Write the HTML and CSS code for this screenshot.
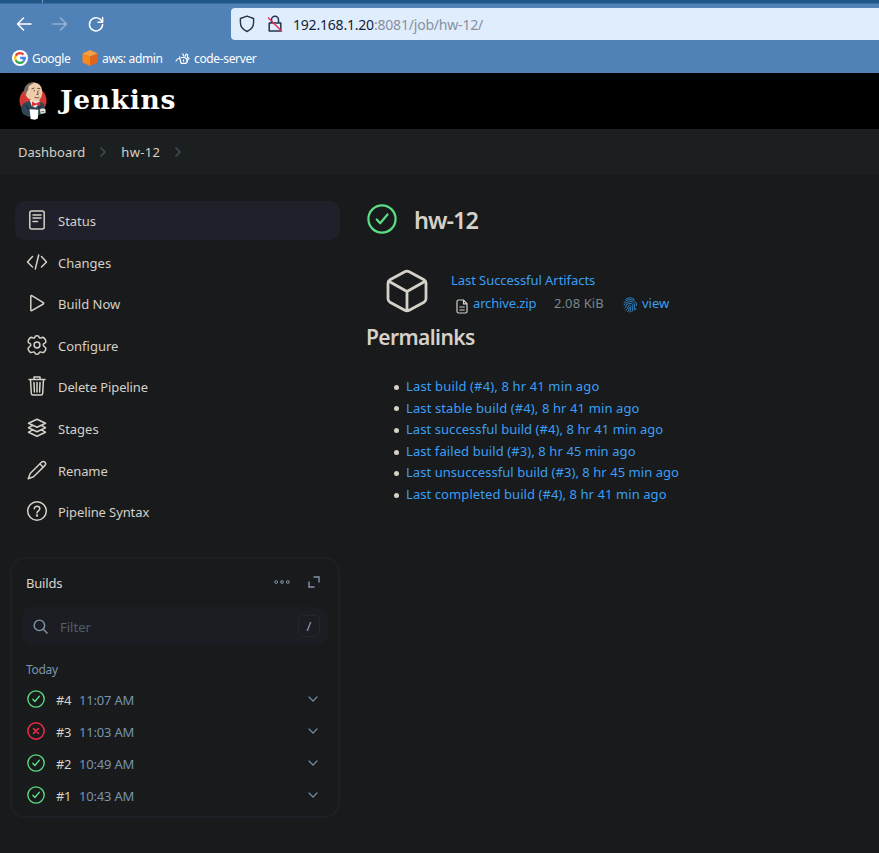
FILE: index.html
```html
<!DOCTYPE html>
<html lang="en">
<head>
<meta charset="utf-8">
<title>hw-12 [Jenkins]</title>
<link rel="stylesheet" href="styles.css">
</head>
<body>
<svg class="defs" width="0" height="0">
  <symbol id="ok" viewBox="0 0 512 512"><circle cx="256" cy="256" r="232" fill="none" stroke="currentColor" stroke-width="38"/><path d="M350 178 L225 328 L166 264" fill="none" stroke="currentColor" stroke-width="38" stroke-linecap="round" stroke-linejoin="round"/></symbol>
  <symbol id="fail" viewBox="0 0 512 512"><circle cx="256" cy="256" r="232" fill="none" stroke="currentColor" stroke-width="44"/><path d="M325 325 187 187M187 325 325 187" fill="none" stroke="currentColor" stroke-width="46" stroke-linecap="round"/></symbol>
  <symbol id="chev" viewBox="0 0 10 6"><path d="M1 1 5 5 9 1" fill="none" stroke="currentColor" stroke-width="1.3" stroke-linecap="round" stroke-linejoin="round"/></symbol>
</svg>
<div class="browser">
  <div class="tabs"><span class="tab-edge"></span></div>
  <div class="toolbar">
    <svg class="nav back" viewBox="0 0 16 16"><path d="M15 8H1.5M7.500 2 1.500 8l6 6"/></svg>
    <svg class="nav forward" viewBox="0 0 16 16"><path d="M1 8h13.500M8.500 2l6 6-6 6"/></svg>
    <svg class="nav reload" viewBox="0 0 16 16"><path d="M14.200 6A6.600 6.600 0 1 0 14.600 8.500"/><path d="M14.600 1.500V6.200H10"/></svg>
    <div class="url">
      <svg class="shield" viewBox="0 0 16 18"><path d="M8 1.200 14.600 3.500V7.500C14.600 11.500 12 14.800 8 16.500 4 14.800 1.400 11.500 1.400 7.500V3.500Z"/></svg>
      <svg class="lock" viewBox="0 0 16 18"><path d="M4.500 8V4.800a3.500 3.500 0 0 1 7 0V8M2.200 8h11.600v8H2.200z"/><path class="slash" d="M1 2.500 15 16.500"/></svg>
      <span class="address"><b>192.168.1.20</b>:8081/job/hw-12/</span>
    </div>
  </div>
  <div class="bookmarks">
    <svg class="bm-google" viewBox="0 0 16 16"><circle cx="8" cy="8" r="8" fill="#fff"/><g fill="none" stroke-width="2.300"><path d="M11.500 4.600A4.800 4.800 0 0 0 3.700 5.800" stroke="#ea4335"/><path d="M3.700 5.800A4.800 4.800 0 0 0 3.700 10.200" stroke="#fbbc05"/><path d="M3.700 10.200A4.800 4.800 0 0 0 11.200 11.600" stroke="#34a853"/><path d="M11.200 11.600A4.800 4.800 0 0 0 12.800 8H8.200" stroke="#4285f4"/></g></svg>
    <span class="bm-text t-google">Google</span>
    <svg class="bm-aws" viewBox="0 0 16 16"><path d="M8 0 15.500 3.500 8 6.500.5 3.500Z" fill="#f9a03f"/><path d="M.5 3.500 8 6.500V16L.5 12.500Z" fill="#f68a1f"/><path d="M15.500 3.500 8 6.500V16l7.500-3.500Z" fill="#e2661a"/></svg>
    <span class="bm-text t-aws">aws: admin</span>
    <svg class="bm-code" viewBox="0 0 15 13"><path d="M.7 9.500Q2 6.500 5 6M4.500 4.500l1.500 7M6 11.300h4.500Q12 11.300 12 8.500T9 5.500H6M8.500 7.500v2M7.500 1.500l1.500 3M11.500 1.500 10 4.500M12.500 2v3.500l1.500 1-1.500 1v3"/></svg>
    <span class="bm-text t-code">code-server</span>
  </div>
</div>
<header class="header">
  <svg class="butler" viewBox="0 0 30 40">
    <ellipse cx="14.500" cy="19.500" rx="14" ry="14" fill="#d33833"/>
    <path d="M5 34C1.500 31 1.500 25 5 22l6-2 12 1c3 1 4 4 3.500 7l-2 5-7 3H9Z" fill="#2f4654"/>
    <path d="M11 19l2 6 4 2 5-5-1-3Z" fill="#e8e4df"/>
    <path d="M6 7C8 2 12 0 17 1c5 1 7 5 7 10 0 6-3 9-7.500 9C11.500 19.500 7 16 6 12Z" fill="#efcdab"/>
    <path d="M8 3.500C4.500 6 5 12 7 14.500l1-4 1.500-2 .5-4 5-3C13 0 10 1 8 3.500Z" fill="#6f6862"/>
    <path d="M13 7.500l3-1M19 7h3M15 9.500h1.500M20 9.500h1M19 10l1 3-2 .5M16 16c2 1 4 1 5 0" fill="none" stroke="#4b3a32" stroke-width=".9"/>
    <path d="M13.500 20.500l4 2 4-2 .8 4.500-4.300-1-4.500 1.500Z" fill="#e02e35"/>
    <path d="M7 24l3 5M23 25l-3 3" fill="none" stroke="#16222b"/>
    <path d="M11 28.500l9 .5-.5 9-3 1.500-4.500-1Z" fill="#fff"/>
    <path d="M21.500 29c1.500-1.500 5-1.500 6 0v3.500l-5 1Z" fill="#e6e2dc"/><path d="M23 31h3" stroke="#514a47" stroke-width=".8"/>
  </svg>
  <span class="wordmark">Jenkins</span>
</header>
<nav class="crumbs">
  <span class="c-dash">Dashboard</span>
  <svg class="crumb-sep" viewBox="0 0 8 12"><path d="M1.500 1.500 6 6l-4.500 4.500"/></svg>
  <span class="c-job">hw-12</span>
  <svg class="crumb-sep" viewBox="0 0 8 12"><path d="M1.500 1.500 6 6l-4.500 4.500"/></svg>
</nav>
<div class="page">
  <aside class="side">
    <div class="tasks">
      <div class="task active"><svg viewBox="0 0 22 22"><rect x="3.800" y="2" width="14.400" height="18" rx="2"/><path d="M7 6h8M7 9h8M7 12.500h4.500"/></svg><span>Status</span></div>
      <div class="task"><svg viewBox="0 0 22 22"><path d="M6.500 5.500 1.500 11l5 5M15.500 5.500l5 5.500-5 5M12.700 4 9.300 18"/></svg><span>Changes</span></div>
      <div class="task"><svg viewBox="0 0 22 22"><path d="M4.800 4.200v13.800c0 .7.500.9 1 .6L17.300 12c.5-.3.500-1 0-1.300L5.800 3.600c-.5-.3-1 0-1 .6Z"/></svg><span>Build Now</span></div>
      <div class="task"><svg viewBox="0 0 22 22"><circle cx="11" cy="11" r="2.900"/><path d="M8.800 3.300Q9 1.700 11 1.700t2.200 1.600q.6 1.200 2 .5 1.700-1 3 .3 1.700 1.700 1.700 3.400-.1 1.200-1.300 1.700-1.400.8-1.400 1.800t1.400 1.800q1.200.6 1.300 1.700 0 1.700-1.700 3.400-1.300 1.200-3 .3-1.400-.7-2 .5-.2 1.600-2.200 1.600t-2.200-1.600q-.6-1.200-2-.5-1.700.9-3-.3-1.700-1.700-1.700-3.400.1-1.100 1.300-1.700Q4.800 12 4.800 11T3.400 9.200Q2.200 8.700 2.100 7.500q0-1.700 1.700-3.400 1.300-1.300 3-.3 1.400.7 2-.5Z"/></svg><span>Configure</span></div>
      <div class="task"><svg viewBox="0 0 22 22"><path d="M3 4.500h16M8 4.500V2h6v2.500M4.500 4.500l.8 13.700q.1 1.800 1.700 1.800h8q1.600 0 1.700-1.800l.8-13.700M8 7.500l.4 9.500M11 7.500V17M14 7.500l-.4 9.500"/></svg><span class="w-delete">Delete Pipeline</span></div>
      <div class="task"><svg viewBox="0 0 22 22"><path d="M11 2.200 19.500 6.300 11 10.300 2.500 6.300ZM5.800 8.800 2.500 10.700 11 14.800l8.500-4.100-3.300-1.900M5.800 13.300 2.500 15.200 11 19.300l8.500-4.100-3.300-1.900"/></svg><span>Stages</span></div>
      <div class="task"><svg viewBox="0 0 22 22"><path d="M15.400 3.200 4.200 14.500 2.200 19.800l5.300-2L18.800 6.600q1.700-1.900.2-3.400t-3.600 0ZM13.800 4.800l3.400 3.400"/></svg><span class="w-rename">Rename</span></div>
      <div class="task"><svg viewBox="0 0 22 22"><circle cx="11" cy="11" r="9.300"/><path d="M8.300 8.700C8.300 5.300 13.800 5.400 13.800 8.700 13.800 10.900 11 10.800 11 13"/><circle cx="11" cy="15.500" r=".5"/></svg><span class="w-syntax">Pipeline Syntax</span></div>
    </div>
    <section class="builds">
      <div class="builds-head">
        <h2>Builds</h2>
        <svg class="dots" viewBox="0 0 16 6"><circle cx="2.200" cy="3" r="1.400"/><circle cx="8" cy="3" r="1.400"/><circle cx="13.800" cy="3" r="1.400"/></svg>
        <svg class="expand" viewBox="0 0 12 12"><path d="M5.500 1H11v5.500M1 5.500V11h5.500"/></svg>
      </div>
      <div class="filter">
        <svg viewBox="0 0 16 16"><circle cx="6.800" cy="6.800" r="5.600"/><path d="m11 11 4 4"/></svg>
        <span class="placeholder">Filter</span>
        <span class="key">/</span>
      </div>
      <div class="today">Today</div>
      <div class="build"><svg class="ball good"><use href="#ok"/></svg><span class="num">#4</span><span class="time">11:07 AM</span><svg class="chevron"><use href="#chev"/></svg></div>
      <div class="build"><svg class="ball bad"><use href="#fail"/></svg><span class="num">#3</span><span class="time">11:03 AM</span><svg class="chevron"><use href="#chev"/></svg></div>
      <div class="build"><svg class="ball good"><use href="#ok"/></svg><span class="num">#2</span><span class="time">10:49 AM</span><svg class="chevron"><use href="#chev"/></svg></div>
      <div class="build"><svg class="ball good"><use href="#ok"/></svg><span class="num">#1</span><span class="time">10:43 AM</span><svg class="chevron"><use href="#chev"/></svg></div>
    </section>
  </aside>
  <main class="main">
    <div class="title"><svg class="good"><use href="#ok"/></svg><h1>hw-12</h1></div>
    <div class="artifacts">
      <svg class="box" viewBox="0 0 42 44"><path d="M18.800 2.700 4 10.800Q2 12 2 14.200v15.600q0 2.200 2 3.400l14.800 8.100q2.200 1.200 4.400 0L38 33.200q2-1.200 2-3.400V14.200q0-2.200-2-3.400L23.200 2.700q-2.200-1.200-4.400 0ZM2.800 12.300 21 22.500 39.200 12.300M21 22.500V42"/></svg>
      <div class="art-text">
        <a class="art-title">Last Successful Artifacts</a>
        <div class="art-row">
          <svg class="file" viewBox="0 0 12 15"><path d="M7.500 1H2.500Q1 1 1 2.500v10Q1 14 2.500 14h7q1.500 0 1.500-1.500V4.800ZM7.500 1v3.800H11M3.300 8h5.400M3.300 11h5.400"/></svg>
          <a class="art-file">archive.zip</a>
          <span class="size">2.08 KiB</span>
          <svg class="finger" viewBox="0 0 14 16"><path d="M2.500 2.500Q7-1 11.500 2.500M.7 6Q2.500 2.500 7 2.500T13.300 6v3M.7 8.500Q2.500 4.500 7 4.500t4.500 4.500q0 2.500-.5 4.500M1.500 11.500Q3 10.500 3 9 3.200 6.400 6.800 6.400T9.700 10q0 2.500-.9 5M2.500 13.500Q5 12 5 9.500 5.200 8.200 6.500 8.200T7.800 10q0 3-1.300 5.500M13 11l-.5 2M4.500 15Q6.300 13 6.400 10"/></svg>
          <a class="view">view</a>
        </div>
      </div>
    </div>
    <h2 class="perma">Permalinks</h2>
    <ul class="links">
      <li><a class="l1">Last build (#4), 8 hr 41 min ago</a></li>
      <li><a class="l2">Last stable build (#4), 8 hr 41 min ago</a></li>
      <li><a class="l3">Last successful build (#4), 8 hr 41 min ago</a></li>
      <li><a class="l4">Last failed build (#3), 8 hr 45 min ago</a></li>
      <li><a class="l5">Last unsuccessful build (#3), 8 hr 45 min ago</a></li>
      <li><a class="l6">Last completed build (#4), 8 hr 41 min ago</a></li>
    </ul>
  </main>
</div>
</body>
</html>
```
FILE: styles.css
```css
* { box-sizing: border-box; }
body {
  margin: 0;
  height: 853px;
  overflow: hidden;
  background: #181a1b;
  color: #d5d0c8;
  font: 13px/20px "Noto Sans", "Open Sans", sans-serif;
}
svg { display: block; flex: none; fill: none; stroke: currentColor; overflow: visible; }
.defs { position: absolute; }
h1, h2, ul { margin: 0; padding: 0; font-weight: 400; }
span, a { white-space: nowrap; }

.browser { height: 73px; background: #5081b7; color: #fff; }
.tabs { height: 4px; background: #20568a; border-bottom: 1px solid #3b6c9e; }
.tab-edge { display: block; width: 1px; height: 3px; margin-left: 42px; background: #7899b9; }
.toolbar { height: 40px; display: flex; align-items: center; padding-left: 16px; }
.nav { width: 16px; height: 16px; stroke-width: 1.5; stroke-linecap: round; stroke-linejoin: round; }
.forward { margin-left: 20px; opacity: .4; }
.reload { margin-left: 20px; }
.url {
  flex: 1; height: 32px; margin: 0 0 0 127px; padding-left: 8px;
  display: flex; align-items: center;
  background: #e0edfc; border-radius: 4px 0 0 4px; color: #26344e;
}
.shield { width: 16px; height: 18px; stroke-width: 1.4; stroke-linejoin: round; }
.lock { width: 16px; height: 18px; margin-left: 12px; stroke-width: 1.5; stroke-linejoin: round; }
.lock .slash { stroke: #ed2a5b; stroke-width: 1.4; }
.address { margin-left: 10px; padding-top: 1px; font-size: 14px; letter-spacing: -.2px; color: #8790a0; }
.address b { font-weight: 400; color: #15213a; }
.bookmarks { height: 28px; display: flex; align-items: center; padding-left: 12px; font-size: 12px; letter-spacing: -.35px; }
.bm-google { width: 16px; height: 16px; stroke: none; }
.bm-text { margin-left: 4px; padding-top: 2px; }
.t-google { width: 50px; }
.bm-aws { width: 16px; height: 16px; stroke: none; }
.t-aws { width: 72px; }
.bm-code { width: 15px; height: 13px; margin-left: 1px; stroke-width: 1.2; }

.header { height: 56px; display: flex; align-items: center; padding-left: 19px; background: #000; }
.butler { width: 29px; height: 40px; stroke: none; }
.wordmark { margin-left: 12px; margin-top: -3px; font: bold 26.500px/40px "DejaVu Serif", serif; letter-spacing: .7px; color: #fff; }

.crumbs { height: 46px; display: flex; align-items: center; padding-left: 18px; background: #1c1f20; }
.crumb-sep { width: 8px; height: 12px; margin-left: 14px; color: #3e4c59; stroke-width: 1.5; }
.c-job { margin-left: 14px; letter-spacing: .3px; }

.page { display: flex; padding-top: 26px; }
.side { width: 340px; flex: none; }
.tasks { padding-left: 15px; display: flex; flex-direction: column; gap: 2.600px; }
.task { height: 39px; display: flex; align-items: center; padding-left: 11px; border-radius: 10px; }
.task.active { background: #1f2029; }
.task svg { width: 22px; height: 22px; stroke-width: 1.500px; stroke-linecap: round; stroke-linejoin: round; margin-top: -1px; }
.task span { margin-left: 10px; padding-top: 1px; }
.w-delete, .w-syntax, .w-rename { letter-spacing: -.1px; }

.builds {
  width: 330px; height: 261px; margin: 26px 0 0 10px; padding: 14px 10px 0;
  border: 2px solid #1f1f28; border-radius: 15px;
}
.builds-head { height: 20px; display: flex; align-items: center; padding-left: 4px; color: #8195a8; }
.builds h2 { flex: 1; font-size: 13px; letter-spacing: -.2px; color: #d8d4cd; }
.dots { width: 16px; height: 6px; stroke-width: 1; margin-top: -2px; }
.expand { width: 12px; height: 12px; margin: -2px 8px 0 18px; stroke-width: 1.4; }
.filter {
  height: 38px; margin-top: 14px; padding: 0 8px 0 11px;
  display: flex; align-items: center; background: #1c1d23; border-radius: 10px;
}
.filter svg { width: 15px; height: 15px; color: #8195a8; stroke-width: 1.5; stroke-linecap: round; }
.placeholder { flex: 1; margin-left: 12px; padding-top: 1px; color: #535e69; }
.key { width: 22px; height: 22px; border: 1px solid #24252e; border-radius: 5px; text-align: center; color: #95a8b8; }
.today { height: 20px; margin: 15px 0 4px 4px; font-size: 12px; letter-spacing: -.3px; color: #7e97af; }
.build { height: 32px; display: flex; align-items: center; padding-left: 5px; color: #7894ad; }
.ball { width: 18px; height: 18px; margin-top: -2px; }
.good { color: #5cdd85; }
.bad { color: #e92b48; }
.num { width: 23px; margin-left: 11px; letter-spacing: -.3px; color: #d5d0c8; }
.time { flex: 1; letter-spacing: -.2px; }
.chevron { width: 10px; height: 6px; margin: -2px 10px 0 0; color: #7189a0; }

.main { margin-left: 26px; padding-top: 4px; }
.title { height: 28px; display: flex; align-items: center; padding-left: 1px; }
.title svg { width: 30px; height: 30px; }
.title h1 { margin: 2px 0 0 17px; font-size: 23.500px; line-height: 28px; font-weight: 600; letter-spacing: -1px; }
.artifacts { display: flex; padding: 37px 0 0 20px; height: 88px; }
.box { width: 42px; height: 44px; margin-top: -1px; stroke-width: 2.800px; stroke-linejoin: round; }
.art-text { margin-left: 23px; }
a { color: #3b9ff5; }
.art-title { display: inline-block; height: 23px; letter-spacing: -.06px; }
.art-row { display: flex; align-items: center; height: 20px; padding-left: 5px; }
.file { width: 12px; height: 15px; margin-top: 6px; stroke-width: 1.2; }
.art-file { width: 81px; margin-left: 5px; letter-spacing: -.15px; }
.size { width: 69px; color: #7b858f; letter-spacing: .1px; }
.finger { width: 14px; height: 16px; color: #3289d1; stroke-width: .9; margin-top: 3px; }
.view { margin-left: 5px; }
.perma { margin-top: 2px; font-size: 21px; line-height: 28px; font-weight: 600; letter-spacing: -.6px; }
.links { margin-top: 25px; padding-left: 28px; list-style: none; }
.links li { display: flex; align-items: center; height: 21.600px; line-height: 21.600px; }
.links li::before { content: ""; width: 5px; height: 5px; margin: 1px 7px 0 0; border-radius: 50%; background: #d5d0c8; }
.l1 { letter-spacing: .14px; }
.l2 { letter-spacing: .11px; }
.l3 { letter-spacing: .06px; }
.l4 { letter-spacing: .09px; }
.l5 { letter-spacing: .05px; }
.l6 { letter-spacing: .08px; }
```
